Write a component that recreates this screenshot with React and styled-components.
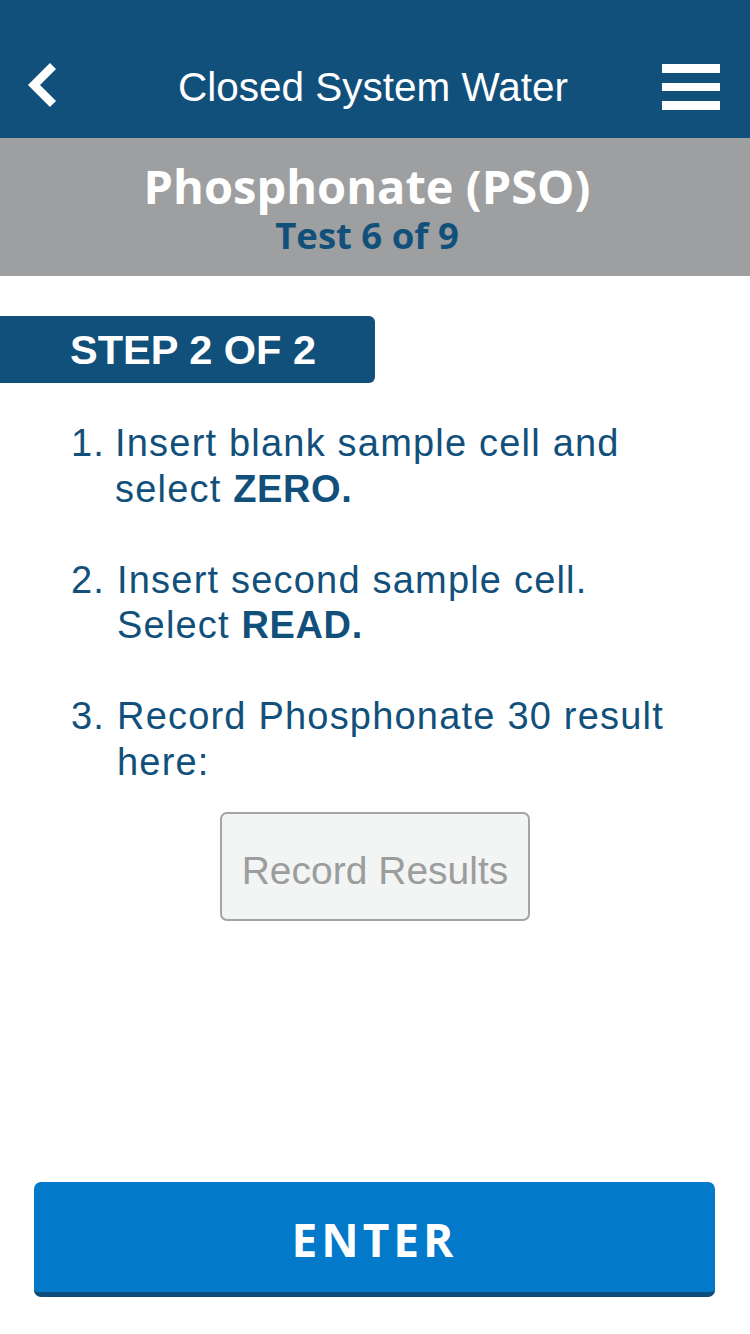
import React from 'react';
import styled, { createGlobalStyle } from 'styled-components';

const GlobalStyle = createGlobalStyle`
  html, body {
    margin: 0;
    padding: 0;
    background: #ffffff;
  }
  * {
    box-sizing: border-box;
  }
`;

const Screen = styled.div`
  width: 750px;
  min-height: 1334px;
  display: flex;
  flex-direction: column;
  background: #ffffff;
  font-family: 'Liberation Sans', Arial, sans-serif;
`;

const TopBar = styled.header`
  height: 138px;
  padding: 36px 30px 0 26px;
  background: #12507c;
  display: grid;
  grid-template-columns: 1fr auto 1fr;
  align-items: center;
`;

const BackButton = styled.button`
  justify-self: start;
  width: 36px;
  height: 50px;
  padding: 0;
  border: none;
  background: none;
  display: flex;
  align-items: center;
  cursor: pointer;
`;

const BarTitle = styled.h1`
  margin: 0;
  font-size: 40.5px;
  font-weight: 400;
  color: #ffffff;
`;

const MenuButton = styled.button`
  justify-self: end;
  width: 58px;
  padding: 0;
  border: none;
  background: none;
  display: flex;
  flex-direction: column;
  gap: 10px;
  cursor: pointer;
`;

const MenuBar = styled.span`
  display: block;
  height: 8.5px;
  background: #ffffff;
`;

const TestBand = styled.section`
  height: 138px;
  background: #9d9fa0;
  display: flex;
  flex-direction: column;
  align-items: center;
  padding: 21px 16px 0 0;
  font-family: 'Open Sans', 'Liberation Sans', sans-serif;
  font-weight: 700;
`;

const TestName = styled.h2`
  margin: 0;
  font-size: 47px;
  line-height: 54px;
  font-weight: 700;
  color: #ffffff;
`;

const TestCount = styled.div`
  margin-top: 2px;
  font-size: 36.5px;
  line-height: 40px;
  color: #12507c;
`;

const StepTag = styled.div`
  margin-top: 40px;
  width: 375px;
  height: 67px;
  padding-left: 70px;
  display: flex;
  align-items: center;
  background: #12507c;
  border-radius: 0 6px 6px 0;
  color: #ffffff;
  font-size: 41.5px;
  font-weight: 700;
`;

const Steps = styled.ol`
  list-style: none;
  margin: 38px 0 0;
  padding: 0 40px 0 71px;
  color: #12507c;
  font-size: 38px;
  line-height: 45.5px;
  letter-spacing: 1.2px;
`;

const Step = styled.li`
  display: flex;
  margin-bottom: ${p => (p.$last ? '0' : '45.5px')};
`;

const StepNum = styled.span`
  flex: 0 0 ${p => p.$w || '45px'};
`;

const StepText = styled.span`
  flex: 1;

  b {
    font-weight: 700;
    letter-spacing: 0.6px;
  }
`;

const RecordButton = styled.button`
  align-self: center;
  margin-top: 27px;
  width: 310px;
  height: 109px;
  padding-top: 10px;
  border: 2px solid #a3a4a4;
  border-radius: 7px;
  background: #f3f4f4;
  color: #9c9d9d;
  font-family: 'Liberation Sans', Arial, sans-serif;
  font-size: 39px;
  cursor: pointer;
`;

const Footer = styled.div`
  margin-top: auto;
  padding: 0 35px 37px 34px;
`;

const EnterButton = styled.button`
  width: 100%;
  height: 115px;
  border: none;
  border-bottom: 5px solid #0c4d7c;
  border-radius: 7px;
  background: #0279c9;
  color: #ffffff;
  font-family: 'Open Sans', 'Liberation Sans', sans-serif;
  font-size: 46px;
  font-weight: 700;
  letter-spacing: 4px;
  padding-top: 4px;
  cursor: pointer;
`;

const ChevronIcon = () => (
  <svg width="36" height="50" viewBox="0 0 36 50">
    <polyline
      points="27,4 8,23 27,42"
      fill="none"
      stroke="#ffffff"
      strokeWidth="8.5"
      strokeLinecap="butt"
      strokeLinejoin="miter"
    />
  </svg>
);

const steps = [
  { num: '1.', w: '44px', body: <>Insert blank sample cell and select <b>ZERO.</b></> },
  { num: '2.', w: '46px', body: <>Insert second sample cell. Select <b>READ.</b></> },
  { num: '3.', w: '46px', body: <>Record Phosphonate 30 result here:</> },
];

const App = () => (
  <Screen>
    <GlobalStyle />
    <TopBar>
      <BackButton aria-label="Back">
        <ChevronIcon />
      </BackButton>
      <BarTitle>Closed System Water</BarTitle>
      <MenuButton aria-label="Menu">
        <MenuBar />
        <MenuBar />
        <MenuBar />
      </MenuButton>
    </TopBar>

    <TestBand>
      <TestName>Phosphonate (PSO)</TestName>
      <TestCount>Test 6 of 9</TestCount>
    </TestBand>

    <StepTag>STEP 2 OF 2</StepTag>

    <Steps>
      {steps.map((s, i) => (
        <Step key={s.num} $last={i === steps.length - 1}>
          <StepNum $w={s.w}>{s.num}</StepNum>
          <StepText>{s.body}</StepText>
        </Step>
      ))}
    </Steps>

    <RecordButton>Record Results</RecordButton>

    <Footer>
      <EnterButton>ENTER</EnterButton>
    </Footer>
  </Screen>
);

export default App;
